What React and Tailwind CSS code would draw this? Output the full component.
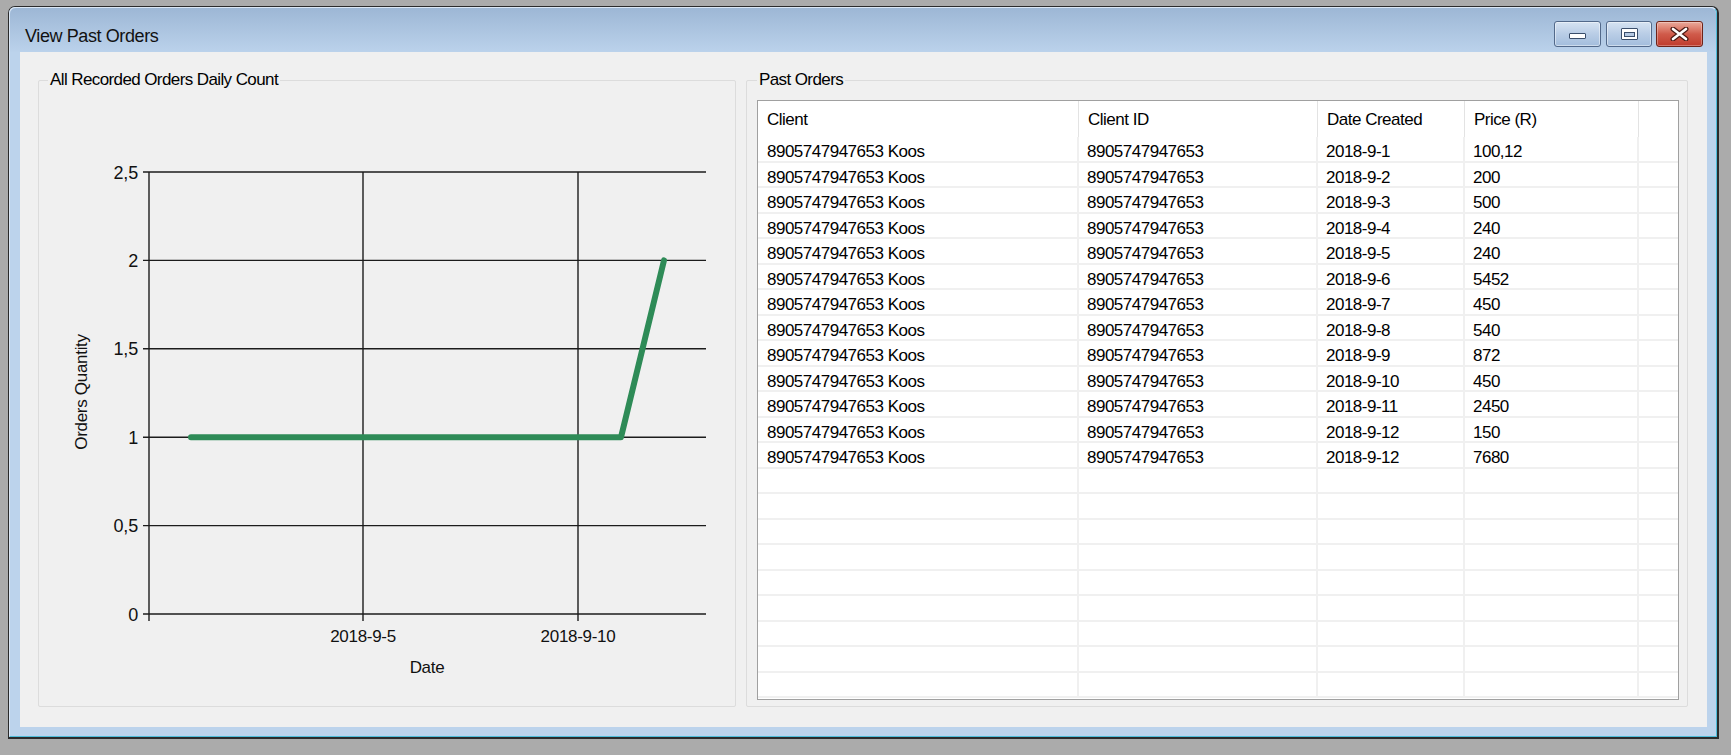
import React from "react";

const orders = [
  ["2018-9-1", "100,12"],
  ["2018-9-2", "200"],
  ["2018-9-3", "500"],
  ["2018-9-4", "240"],
  ["2018-9-5", "240"],
  ["2018-9-6", "5452"],
  ["2018-9-7", "450"],
  ["2018-9-8", "540"],
  ["2018-9-9", "872"],
  ["2018-9-10", "450"],
  ["2018-9-11", "2450"],
  ["2018-9-12", "150"],
  ["2018-9-12", "7680"],
];

const columns = ["Client", "Client ID", "Date Created", "Price (R)", ""];

function TitleButtons() {
  return (
    <div className="flex mt-[13px] pr-[13px]">
      <div className="w-[47px] h-[26px] rounded-[3px] border border-[#52698a] bg-linear-to-b from-[#d6e3f2] via-[#b9cde6] to-[#a3bddc] shadow-[inset_0_0_0_1px_rgba(255,255,255,0.45)] flex items-center justify-center">
        <div className="w-[17px] h-[6px] mt-[4px] bg-white border border-[#3a4e6b] rounded-[1px]" />
      </div>
      <div className="ml-[5px] w-[46px] h-[26px] rounded-[3px] border border-[#52698a] bg-linear-to-b from-[#d6e3f2] via-[#b9cde6] to-[#a3bddc] shadow-[inset_0_0_0_1px_rgba(255,255,255,0.45)] flex items-center justify-center">
        <div className="w-[17px] h-[12px] border border-[#3a4e6b] bg-white px-[2px] pt-[3px] pb-[2px] rounded-[1px]">
          <div className="w-full h-full border border-[#3a4e6b] bg-[#b4c8e2]" />
        </div>
      </div>
      <div className="ml-[4px] w-[47px] h-[26px] rounded-[3px] border border-[#6e2318] bg-linear-to-b from-[#e9a99b] via-[#d05b4b] to-[#bf3b2c] shadow-[inset_0_0_0_1px_rgba(255,255,255,0.3)] flex items-center justify-center">
        <svg width="19" height="14" viewBox="0 0 19 14">
          <path d="M3 2 L16 12 M16 2 L3 12" stroke="#4a1a14" strokeWidth="5" strokeLinecap="round" />
          <path d="M3 2 L16 12 M16 2 L3 12" stroke="#ffffff" strokeWidth="2.6" strokeLinecap="round" />
        </svg>
      </div>
    </div>
  );
}

function OrdersChart() {
  const grid = [91, 179.4, 267.8, 356.2, 444.6, 533];
  const labels = ["2,5", "2", "1,5", "1", "0,5", "0"];
  const dayX = (d) => 324 + (d - 5) * 43;
  const counts = [1, 1, 1, 1, 1, 1, 1, 1, 1, 1, 1, 2];
  const valY = (v) => 533 - v * 176.8;
  const points = counts.map((c, i) => `${dayX(i + 1)},${valY(c)}`).join(" ");

  return (
    <svg width="696" height="625" className="block">
      {grid.map((y, i) => (
        <g key={i}>
          <line x1="104" x2="667" y1={y} y2={y} stroke="#1c1c1c" strokeWidth="1.4" />
          <text x="99" y={y + 6.5} fontSize="18" letterSpacing="-0.2" textAnchor="end" fill="#111">
            {labels[i]}
          </text>
        </g>
      ))}
      <line x1="110" x2="110" y1="91" y2="540" stroke="#1c1c1c" strokeWidth="1.4" />
      <line x1={dayX(5)} x2={dayX(5)} y1="91" y2="540" stroke="#1c1c1c" strokeWidth="1.4" />
      <line x1={dayX(10)} x2={dayX(10)} y1="91" y2="540" stroke="#1c1c1c" strokeWidth="1.4" />
      <text x={dayX(5)} y="561" fontSize="17" letterSpacing="-0.3" textAnchor="middle" fill="#111">
        2018-9-5
      </text>
      <text x={dayX(10)} y="561" fontSize="17" letterSpacing="-0.3" textAnchor="middle" fill="#111">
        2018-9-10
      </text>
      <text x="388" y="592" fontSize="17" letterSpacing="-0.3" textAnchor="middle" fill="#111">
        Date
      </text>
      <text
        x="48"
        y="311"
        fontSize="17"
        letterSpacing="-0.3"
        textAnchor="middle"
        fill="#111"
        transform="rotate(-90 48 311)"
      >
        Orders Quantity
      </text>
      <polyline
        points={points}
        fill="none"
        stroke="#2e8b57"
        strokeWidth="6"
        strokeLinejoin="round"
        strokeLinecap="round"
      />
    </svg>
  );
}

function OrdersTable() {
  const emptyRows = 9;
  const cols = "grid grid-cols-[321px_239px_147px_174px_1fr]";
  return (
    <div className="flex-1 bg-white border border-[#a0a0a0] flex flex-col overflow-hidden text-[17px] tracking-[-0.5px]">
      <div className={`${cols} h-[36px] shrink-0`}>
        {columns.map((c, i) => (
          <div
            key={i}
            className={`pl-[9px] pt-[2px] leading-[34px] whitespace-nowrap ${
              i < 4 ? "border-r border-[#e3e3e3]" : ""
            }`}
          >
            {c}
          </div>
        ))}
      </div>
      {orders.map(([date, price], r) => (
        <div key={r} className={`${cols} h-[25.5px] shrink-0 border-b-2 border-[#f0f0f0]`}>
          <div className="pl-[9px] pt-[5px] leading-[20px] border-r-2 border-[#f0f0f0] whitespace-nowrap">
            8905747947653 Koos
          </div>
          <div className="pl-[8px] pt-[5px] leading-[20px] border-r-2 border-[#f0f0f0] whitespace-nowrap">
            8905747947653
          </div>
          <div className="pl-[8px] pt-[5px] leading-[20px] border-r-2 border-[#f0f0f0] whitespace-nowrap">
            {date}
          </div>
          <div className="pl-[8px] pt-[5px] leading-[20px] border-r-2 border-[#f0f0f0] whitespace-nowrap">
            {price}
          </div>
          <div />
        </div>
      ))}
      {Array.from({ length: emptyRows }).map((_, r) => (
        <div key={`e${r}`} className={`${cols} h-[25.5px] shrink-0 border-b-2 border-[#f0f0f0]`}>
          <div className="border-r-2 border-[#f0f0f0]" />
          <div className="border-r-2 border-[#f0f0f0]" />
          <div className="border-r-2 border-[#f0f0f0]" />
          <div className="border-r-2 border-[#f0f0f0]" />
          <div />
        </div>
      ))}
    </div>
  );
}

export default function App() {
  return (
    <div className="w-[1731px] h-[755px] bg-[#ababab] pt-[6px] pl-2 overflow-hidden font-['Liberation_Sans',Arial,sans-serif] text-black">
      <div className="w-[1711px] h-[733px] rounded-t-[7px] border-t border-l border-r-2 border-b-2 border-[#2b2b2b] bg-[#bcd3ec]">
        <div className="h-full flex flex-col rounded-t-[6px] border border-[#dbe7f5] border-r-[#4fbcd9] border-b-[#4fbcd9]">
          {/* Title bar */}
          <div className="h-[44px] shrink-0 flex justify-between items-start rounded-t-[6px] bg-linear-to-b from-[#9db7d5] to-[#bbd2eb]">
            <div className="pl-[15px] mt-[18px] leading-[20px] text-[18px] tracking-[-0.4px] text-[#111]">
              View Past Orders
            </div>
            <TitleButtons />
          </div>

          {/* Client area */}
          <div className="flex-1 flex pl-[10px] pr-[9px] pb-[9px]">
            <div className="flex-1 flex bg-[#f0f0f0] pl-[18px] pt-[28px] pr-[19px] pb-[20px] gap-[10px]">
              <div className="relative w-[698px] border border-[#dcdcdc] rounded-[2px]">
                <div className="absolute left-[9px] top-[-11px] px-[2px] bg-[#f0f0f0] leading-[20px] text-[17px] tracking-[-0.6px] whitespace-nowrap">
                  All Recorded Orders Daily Count
                </div>
                <OrdersChart />
              </div>

              <div className="relative flex-1 flex border border-[#dcdcdc] rounded-[2px] pt-[19px] pl-[10px] pr-[8px] pb-[6px]">
                <div className="absolute left-[10px] top-[-11px] px-[2px] bg-[#f0f0f0] leading-[20px] text-[17px] tracking-[-0.6px] whitespace-nowrap">
                  Past Orders
                </div>
                <OrdersTable />
              </div>
            </div>
          </div>
        </div>
      </div>
    </div>
  );
}
